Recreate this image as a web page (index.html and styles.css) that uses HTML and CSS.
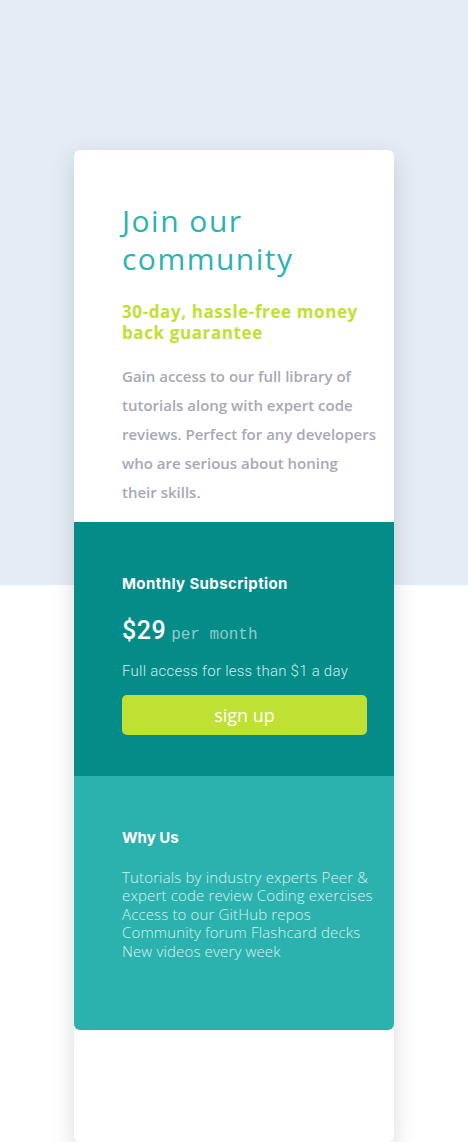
FILE: index.html
```html
<!DOCTYPE html>
<html lang="en">
<head>
<meta charset="utf-8">
<title>Join our community</title>
<link rel="stylesheet" href="styles.css">
</head>
<body>
<main class="page">
  <article class="card">
    <section class="intro">
      <h1 class="title">Join our community</h1>
      <h2 class="guarantee">30-day, hassle-free money back guarantee</h2>
      <p class="desc">Gain access to our full library of tutorials along with expert code reviews. Perfect for any developers who are serious about honing <span class="nowrap">their skills.</span></p>
    </section>
    <section class="sub">
      <h3 class="sub-title">Monthly Subscription</h3>
      <p class="price"><span class="amount">$29</span><span class="per">per month</span></p>
      <p class="sub-note">Full access for less than $1 a day</p>
      <button class="signup" type="button">sign up</button>
    </section>
    <section class="why">
      <h3 class="why-title">Why Us</h3>
      <p class="why-list">Tutorials by industry experts Peer &amp; expert code review Coding exercises Access to our GitHub repos Community forum Flashcard decks New videos every week</p>
    </section>
  </article>
</main>
</body>
</html>
```

FILE: styles.css
```css
* { box-sizing: border-box; }
html, body { margin: 0; padding: 0; }
body {
  font-family: "Open Sans", "Liberation Sans", sans-serif;
  background: linear-gradient(to bottom, #e4ecf5 0, #e4ecf5 585px, #ffffff 585px);
  min-height: 1142px;
}
.page {
  padding-top: 150px;
  display: flex;
  justify-content: center;
}
.card {
  width: 320px;
  height: 992px;
  background: #ffffff;
  border-radius: 6px;
  box-shadow: 0 8px 22px rgba(80, 90, 110, 0.22);
  display: flex;
  flex-direction: column;
}
.intro {
  height: 372px;
  padding: 52px 14px 0 48px;
}
.title {
  margin: 0;
  font-family: "Open Sans", sans-serif;
  font-weight: 400;
  font-size: 30px;
  line-height: 38px;
  letter-spacing: 1.5px;
  color: #2bb3b1;
}
.guarantee {
  margin: 23px 0 0;
  font-weight: 700;
  font-size: 17px;
  line-height: 21px;
  letter-spacing: 0.6px;
  color: #bfe133;
}
.desc {
  margin: 19px 0 0;
  font-size: 15px;
  line-height: 29px;
  color: #a8a8b5;
  font-weight: 600;
}
.nowrap { white-space: nowrap; }
.sub {
  height: 254px;
  background: #038c88;
  padding: 52px 27px 0 48px;
  color: #ffffff;
}
.sub-title {
  margin: 0;
  font-family: "Inter", "Roboto", sans-serif;
  font-weight: 700;
  font-size: 15px;
  line-height: 20px;
  letter-spacing: 0.4px;
}
.price {
  margin: 23px 0 0;
  display: flex;
  align-items: baseline;
  gap: 5px;
  line-height: 28px;
}
.amount {
  font-family: "Roboto", sans-serif;
  font-size: 25px;
  font-weight: 500;
  letter-spacing: 0.5px;
}
.per {
  font-family: "Liberation Mono", monospace;
  font-size: 16px;
  color: #94cbc8;
}
.sub-note {
  margin: 13px 0 0;
  font-family: "Roboto", sans-serif;
  font-weight: 300;
  font-size: 15px;
  line-height: 18px;
  letter-spacing: 0.25px;
  color: #d4ecea;
}
.signup {
  display: block;
  margin-top: 15px;
  width: 245px;
  height: 40px;
  border: 0;
  border-radius: 5px;
  background: #bfe133;
  color: #ffffff;
  font-family: "Open Sans", sans-serif;
  font-size: 18px;
  cursor: pointer;
}
.why {
  height: 254px;
  background: #2bb2ae;
  border-radius: 0 0 6px 6px;
  padding: 52px 14px 0 48px;
  color: #ffffff;
}
.why-title {
  margin: 0;
  font-family: "Inter", "Roboto", sans-serif;
  font-weight: 700;
  font-size: 15px;
  line-height: 20px;
}
.why-list {
  margin: 20px 0 0;
  font-family: "Open Sans", sans-serif;
  font-weight: 300;
  font-size: 15px;
  line-height: 18.4px;
  letter-spacing: 0.15px;
  color: #d9f2f0;
}
```
